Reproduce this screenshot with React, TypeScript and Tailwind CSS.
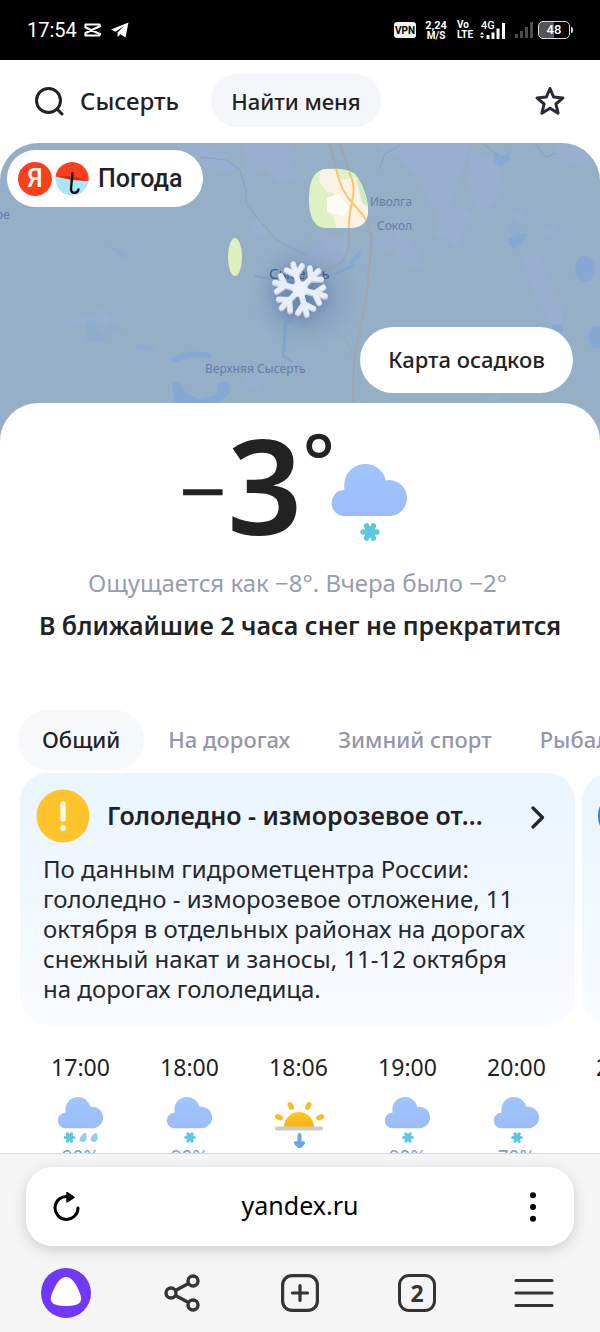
import { type ReactNode } from "react";

const tabs = ["Общий", "На дорогах", "Зимний спорт", "Рыбалка"];

type Hour = {
  time: string;
  kind: "snow" | "sleet" | "sunset";
  chance?: string;
};

const hours: Hour[] = [
  { time: "17:00", kind: "sleet", chance: "90%" },
  { time: "18:00", kind: "snow", chance: "90%" },
  { time: "18:06", kind: "sunset" },
  { time: "19:00", kind: "snow", chance: "90%" },
  { time: "20:00", kind: "snow", chance: "70%" },
  { time: "21:00", kind: "snow", chance: "70%" },
];

/* ---------- Weather icons ---------- */

function Flake({ x, y, s = 1 }: { x: number; y: number; s?: number }) {
  return (
    <g transform={`translate(${x} ${y}) scale(${s})`} fill="#5ec8de">
      <circle r="6" />
      {[0, 60, 120, 180, 240, 300].map((a) => (
        <g key={a} transform={`rotate(${a})`}>
          <rect x="0" y="-2.3" width="7" height="4.6" />
          <circle cx="7" cy="0" r="2.7" />
        </g>
      ))}
    </g>
  );
}

function CloudShape({ id }: { id: string }) {
  return (
    <>
      <defs>
        <linearGradient id={id} x1="0" y1="0" x2="0" y2="1">
          <stop offset="0" stopColor="#9fc6ff" />
          <stop offset="1" stopColor="#9dbcf5" />
        </linearGradient>
      </defs>
      <path
        fill={`url(#${id})`}
        d="M13 52a13 13 0 0 1-1-25.900h1.300v-6.100a21 21 0 0 1 41.500-3.600A18 18 0 1 1 60 52Z"
      />
    </>
  );
}

function BigCloud() {
  return (
    <svg viewBox="0 0 78 79" className="h-[79px] w-[78px]" aria-hidden="true">
      <CloudShape id="cloud-main" />
      <Flake x={39} y={68} />
    </svg>
  );
}

function HourIcon({ kind, id }: { kind: Hour["kind"]; id: string }) {
  if (kind === "sunset") {
    return (
      <svg viewBox="0 0 52 52" className="h-[52px] w-[52px]" aria-hidden="true">
        <defs>
          <linearGradient id={id} x1="0" y1="0" x2="0" y2="1">
            <stop offset="0" stopColor="#ffc62b" />
            <stop offset="1" stopColor="#fdb20a" />
          </linearGradient>
        </defs>
        <path fill={`url(#${id})`} d="M11 31a15 15 0 0 1 30 0Z" />
        <g stroke="#fdbb1f" strokeWidth="5" strokeLinecap="round">
          <path d="M4.500 20.500l3 1.500M17 8.500l1.500 3M36 8.500l-1.500 3M48.500 20.500l-3 1.500" />
        </g>
        <path d="M4 32.500h44" stroke="#c9cbce" strokeWidth="4" strokeLinecap="round" />
        <path
          d="M26.500 39v11M23 47l3.500 3.500 3.500-3.500"
          fill="none"
          stroke="#65a9ea"
          strokeWidth="4"
          strokeLinecap="round"
          strokeLinejoin="round"
        />
      </svg>
    );
  }
  return (
    <svg viewBox="0 0 52 52" className="h-[52px] w-[52px]" aria-hidden="true">
      <g transform="translate(2.500 1) scale(0.600)">
        <CloudShape id={id} />
      </g>
      {kind === "snow" ? (
        <Flake x={26} y={41.500} s={0.6} />
      ) : (
        <>
          <Flake x={14.500} y={41.500} s={0.6} />
          <g fill="#8fcdf5">
            <path d="M30 36.500c2.500 2.500 2.500 9.500-2 9.500-4.500 0-5-5 2-9.500ZM41 36.500c2.500 2.500 2.500 9.500-2 9.500-4.500 0-5-5 2-9.500Z" />
          </g>
        </>
      )}
    </svg>
  );
}

/* ---------- Status bar ---------- */

function StatusBar() {
  return (
    <div className="flex h-[60px] shrink-0 items-center bg-black pr-[27px] pl-[27px] font-['Roboto'] text-white">
      <span className="text-[20px] leading-6">17:54</span>
      <svg viewBox="0 0 18 14" className="ml-[7px] h-[14px] w-[18px]" aria-hidden="true">
        <path
          d="M15.500 3.500V1.500H1.500v3l15.500 7M17 2.800 1.500 10v2.500h14v-2"
          fill="none"
          stroke="#fff"
          strokeWidth="2.200"
          strokeLinejoin="round"
        />
      </svg>
      <svg viewBox="0 0 18 16" className="ml-[9px] h-[16px] w-[18px]" aria-hidden="true">
        <path fill="#fff" d="M17.500.5 0 7.500l4.500 2.200L13 4 6.500 10.600V15l3-2.800 5 3.300Z" />
      </svg>

      <div className="ml-auto flex items-center">
        <span className="flex h-[16px] w-[22px] items-center justify-center rounded-[3px] bg-[#f2f2f2] text-[10px] font-bold text-black">
          VPN
        </span>
        <span className="ml-[8px] w-[24px] text-center text-[11px] leading-[11px] font-bold">
          2,24
          <span className="block text-[10px] leading-[10px]">M/S</span>
        </span>
        <span className="ml-[9px] w-[18px] text-[10px] leading-[10px] font-bold">
          Vo
          <br />
          LTE
        </span>
        <svg viewBox="0 0 26 20" className="ml-[5px] h-[20px] w-[26px]" aria-hidden="true">
          <text x="1" y="9" fill="#fff" fontSize="11" fontWeight="500" fontFamily="Roboto, sans-serif">
            4G
          </text>
          <path fill="#fff" d="M0 14.500 2 12l2 2.500ZM0 16l2 2.500L4 16Z" />
          <path d="M8 15v4M13 12.500v6.500M18 8.500v10.500M23.500 3v16" stroke="#fff" strokeWidth="3" />
        </svg>
        <svg viewBox="0 0 20 18" className="ml-[8px] h-[18px] w-[20px]" aria-hidden="true">
          <path d="M2.500 13v4M7.500 10v7M12.500 6v11M17.500 1v16" stroke="#4c4c4c" strokeWidth="3" />
        </svg>
        <span className="ml-[4px] flex h-[18px] w-[32px] items-center justify-center rounded-[5px] border border-[#ddd] bg-gradient-to-r from-[#555] from-50% to-black to-50% text-[13px] font-medium">
          48
        </span>
        <span className="ml-px h-[6px] w-[2px] rounded-r bg-[#ddd]" />
      </div>
    </div>
  );
}

/* ---------- Header ---------- */

function Header() {
  return (
    <header className="flex h-[83px] items-center px-[34px] pb-[2px]">
      <button type="button" className="flex items-center gap-4 text-[24px] leading-8 font-medium">
        <svg viewBox="0 0 30 30" className="h-[30px] w-[30px]" aria-hidden="true">
          <circle cx="14.500" cy="14.500" r="12" fill="none" stroke="#222" strokeWidth="3" />
          <path d="m23 23 5 5" stroke="#222" strokeWidth="3" strokeLinecap="round" />
        </svg>
        Сысерть
      </button>
      <button
        type="button"
        className="ml-8 h-[53px] w-[170px] rounded-full bg-[#f5f6f9] text-[22px] leading-8 font-medium"
      >
        Найти меня
      </button>
      <button type="button" aria-label="В избранное" className="ml-auto">
        <svg viewBox="0 0 32 32" className="h-[32px] w-[32px]" aria-hidden="true">
          <path
            d="m16 3.500 3.700 8.600 9.300.8-7.100 6.100 2.200 9.200L16 23.300l-8.100 4.900 2.200-9.200L3 12.900l9.300-.8Z"
            fill="none"
            stroke="#2a2b35"
            strokeWidth="3"
            strokeLinejoin="round"
          />
        </svg>
      </button>
    </header>
  );
}

/* ---------- Map ---------- */

const arms = [15, 75, 135, 195, 255, 315];

function Snowflake() {
  return (
    <svg
      viewBox="-34 -34 68 68"
      className="absolute top-[112px] left-1/2 h-[68px] w-[68px] -translate-x-1/2 drop-shadow-[0_4px_7px_rgba(60,90,140,0.45)]"
      aria-hidden="true"
    >
      <g fill="none" stroke="#bccae2" strokeWidth="6" strokeLinecap="round" transform="translate(0 1)">
        {arms.map((a) => (
          <path key={a} transform={`rotate(${a})`} d="M0 0H26M15 0l7-8M15 0l7 8" />
        ))}
      </g>
      <g fill="none" stroke="#e8eef9" strokeWidth="5" strokeLinecap="round">
        {arms.map((a) => (
          <path key={a} transform={`rotate(${a})`} d="M0 0H26M15 0l7-8M15 0l7 8" />
        ))}
      </g>
      <circle r="8" fill="#edf1fa" />
    </svg>
  );
}

function MapLabel({ className, children }: { className: string; children: ReactNode }) {
  return <span className={`absolute whitespace-nowrap ${className}`}>{children}</span>;
}

function MapView() {
  return (
    <section className="relative h-[297px] overflow-hidden rounded-t-[38px] bg-[#95afc7] text-[#687ca8]">
      <svg
        viewBox="0 143 600 297"
        preserveAspectRatio="xMidYMid slice"
        className="block h-full w-full"
        aria-hidden="true"
      >
        <defs>
          <clipPath id="clearing">
            <path d="M325 169c14-1 24 0 30 5 8 10 13 26 13 36 0 14-8 18-20 18h-22c-12 0-17-12-17-28 0-18 4-29 16-31Z" />
          </clipPath>
          <radialGradient id="haze">
            <stop offset="0" stopColor="#7b96bd" stopOpacity=".8" />
            <stop offset="1" stopColor="#7b96bd" stopOpacity="0" />
          </radialGradient>
        </defs>
        {/* built-up and field patches */}
        <g fill="#9dafd5" opacity=".6">
          <path d="m176 143 34 2 20 12-6 4-26-2-16-8ZM200 158l26 2 10 8-8 4-24-4ZM240 143h56l-8 14 12 20-20 6-18-14-14 8ZM376 143h96l-6 18-6 20-10 24-6 10-14-8-10-26-8-8-14-16-14-6ZM408 155l16 4 8 24-6 10-10-14Z" />
          <path d="m470 150 30 10 4 30-12 16-16 6-10-30ZM436 210l28-4 10 10-12 20-4 14-14-12-10-2ZM398 214l14 8-4 14 12 20 4 12-20-2-10-14-16-4-4-8 20-2ZM354 240l-8 18-24 10-20-4 10-18 22-10Z" />
          <path d="m520 256 20-2 4 14 12 26 8 12-4 22-10-6-18-30ZM540 231l20-9-8 14ZM249 221l10-2 10 14-8 6-10-6ZM62 322l28-5 12-9 12 12-10 2-18 2-18 4ZM243 375l26-2-12 18-10-4ZM552 143l30 2 10 14-14 8-20-10ZM512 212l12-4-4 8 6 6-12-2ZM484 396l20-2-8 8Z" />
        </g>
        {/* lakes */}
        <g fill="#84a8d6" opacity=".85">
          <path d="m494 153 8 3 8-5-1 9-10 7-6-8ZM509 238l8-4 10-1-5 12-8 4-6-5ZM170 358l20-7 22 2-2 6-18-2-20 6ZM172 383l8-2 6 12 14 6 16-4 2-12 10-2 2 12-8 7-14 6-34-4ZM349 263l6-8 7-7-2 8-9 9ZM286 314l10 2-8 10-2 26h-3Z" />
          <ellipse cx="585" cy="269" rx="10" ry="13" />
          <ellipse cx="597" cy="337" rx="9" ry="11" />
          <circle cx="557" cy="330" r="6" />
          <path d="m110 247 18 5-4 8ZM104 322l18 7-8 4ZM86 322l8-3 4 10 8 12-22 2ZM136 344l20 2-6 6-14-2ZM506 226l10-4 6 10-12 4Z" opacity=".45" />
        </g>
        {/* rivers and minor roads */}
        <g fill="none" stroke="#7f9bbb" strokeWidth="1" opacity=".7">
          <path d="M200 157l26 3 14 10 6 20v14l30 36 20 10 12 6" />
          <path d="M482 143l16 12M534 143l12 14 10-4M400 145l-16 10-4 14" />
          <path d="M254 276l16 3M355 265l-20 9M285 322l-2 34 10 6" strokeWidth="2" stroke="#7f9fcb" />
        </g>
        <g fill="none" stroke="#a49f9f" opacity=".6">
          <path d="M316 315l12 12 18 12 6 14" />
          <path d="M329 143l8 28 8 26 22 24 5 18-6 60-12 60-1 45" strokeWidth="2" />
          <path d="M340 143l9 28 5 20-5 22v34l-6 14-14 8" strokeWidth="2" />
        </g>
        <circle cx="306" cy="294" r="56" fill="url(#haze)" />
        {/* areas without precipitation */}
        <ellipse cx="235" cy="257" rx="7" ry="19" fill="#def0bd" />
        <g clipPath="url(#clearing)">
          <rect x="300" y="160" width="80" height="80" fill="#ddf1c5" />
          <path
            fill="#f9f3e6"
            d="m321 168 14 2 10 18-8 6-10-2-8-10ZM340 180l24-4 8 60-34-2-4-16-8-10 8-14ZM352 168l16 4 4 20Z"
          />
          <path fill="#fffef4" d="m327 198 12-4 10 14-6 8-16-4Z" />
          <path fill="#cdeebc" d="m356 172 10 14 4 24-8-8-4-16Z" />
          <path
            d="M335 162c3 26 14 38 20 44s12 14 16 22M349 172c6 12 5 20 3 30s-4 16-3 30"
            fill="none"
            stroke="#fbc56b"
            strokeWidth="2"
          />
        </g>
      </svg>

      <MapLabel className="top-[51px] left-[370px] text-[12px] leading-4">Иволга</MapLabel>
      <MapLabel className="top-[75px] left-[377px] text-[12px] leading-4">Сокол</MapLabel>
      <MapLabel className="top-[218px] left-[205px] text-[12px] leading-4">Верхняя Сысерть</MapLabel>
      <MapLabel className="top-[64px] -left-[4px] text-[12px] leading-4">ое</MapLabel>
      <MapLabel className="top-[120px] left-[269px] text-[15px] leading-5 text-[#455a8c]">Сысерть</MapLabel>
      <Snowflake />

      <a
        href="#weather"
        className="absolute top-[7px] left-[7px] flex h-[57px] w-[196px] items-center rounded-full bg-white pl-[11px] text-[#222]"
      >
        <span className="flex h-[34px] w-[34px] items-center justify-center rounded-full bg-[#fc3f1d] font-['Roboto'] text-[25px] leading-8 font-medium text-white">
          Я
        </span>
        <svg viewBox="0 0 34 34" className="ml-[3px] h-[34px] w-[34px]" aria-hidden="true">
          <circle cx="17" cy="17" r="16.500" fill="#a9e5fc" />
          <path d="M.5 14.500a16.500 16.500 0 0 1 33 4.500Z" fill="#fc3f1d" />
          <path d="M.5 14.500 17 14l16.500 5-16.500-1Z" fill="#d32a12" />
          <path
            d="M17.500 11l-1.500 16c-.2 5 6.500 5 7.500.5"
            fill="none"
            stroke="#111"
            strokeWidth="2.400"
            strokeLinecap="round"
          />
        </svg>
        <span className="ml-[9px] font-['Roboto'] text-[25px] leading-8 font-medium">Погода</span>
      </a>

      <button
        type="button"
        className="absolute top-[184px] right-[27px] h-[66px] w-[213px] rounded-full bg-white pb-[3px] text-[22px] leading-8 font-medium text-[#222]"
      >
        Карта осадков
      </button>
    </section>
  );
}

/* ---------- Current weather ---------- */

function CurrentWeather() {
  return (
    <section className="text-center">
      <h1 className="flex h-[148px] justify-center pr-[12px] font-normal">
        <span className="mt-[42px] text-[84px] leading-[88px]">−</span>
        <span className="mt-[14px] text-[132px] leading-[132px] font-semibold">3</span>
        <span className="mt-[18px] text-[76px] leading-[76px] font-medium">°</span>
        <span className="mt-[60px] -ml-[4px]">
          <BigCloud />
        </span>
      </h1>
      <p className="mt-[15px] pr-[5px] text-[24px] leading-8 text-[#9a9cb0]">
        Ощущается как −8°. Вчера было −2°
      </p>
      <p className="mt-[10px] text-[25px] leading-8 font-semibold">
        В ближайшие 2 часа снег не прекратится
      </p>
    </section>
  );
}

function Tabs() {
  return (
    <nav className="mt-[69px] flex h-[60px] overflow-hidden pl-[18px]">
      {tabs.map((tab, i) => (
        <button
          key={tab}
          type="button"
          className={`shrink-0 rounded-full px-6 pb-[3px] text-[22px] leading-8 font-medium whitespace-nowrap ${
            i === 0 ? "bg-[#f7f8fa] text-[#222]" : "text-[#9496ac]"
          }`}
        >
          {tab}
        </button>
      ))}
    </nav>
  );
}

function Alerts() {
  return (
    <section className="mt-[3px] flex gap-[7px] overflow-hidden pl-[20px]">
      <article className="w-[calc(100vw-45px)] shrink-0 rounded-[28px] bg-gradient-to-b from-[#e9f5ff] to-[#f9fbff] px-[23px] pt-[16px] pb-[21px]">
        <button type="button" className="-ml-[7px] flex w-full items-center text-left">
          <svg viewBox="0 0 54 54" className="h-[54px] w-[54px] shrink-0" aria-hidden="true">
            <circle cx="27" cy="27" r="26.500" fill="#ffc42b" />
            <path d="M27 15v15" stroke="#fff8e4" strokeWidth="5.500" strokeLinecap="round" />
            <circle cx="27" cy="39" r="3" fill="#fff8e4" />
          </svg>
          <span className="ml-[17px] pb-[3px] text-[25px] leading-8 font-semibold whitespace-nowrap">
            Гололедно - изморозевое от...
          </span>
          <svg viewBox="0 0 14 26" className="ml-auto h-[26px] w-[14px]" aria-hidden="true">
            <path d="m2 5 9.500 9.500L2 24" fill="none" stroke="#222530" strokeWidth="3.200" strokeLinecap="round" strokeLinejoin="round" />
          </svg>
        </button>
        <p className="mt-[11px] text-[24px] leading-[30px] text-[#25282d]">
          По данным гидрометцентра России:
          <br />
          гололедно - изморозевое отложение, 11
          <br />
          октября в отдельных районах на дорогах
          <br />
          снежный накат и заносы, 11-12 октября
          <br />
          на дорогах гололедица.
        </p>
      </article>
      <article className="w-[calc(100vw-45px)] shrink-0 rounded-[28px] bg-gradient-to-b from-[#e9f5ff] to-[#f9fbff] px-[16px] pt-[16px]">
        <div className="h-[54px] w-[54px] rounded-full bg-[#2f7fc9]" />
      </article>
    </section>
  );
}

function Hourly() {
  return (
    <ul className="mt-[26px] flex overflow-hidden pl-[26px]">
      {hours.map((hour, i) => (
        <li key={hour.time} className="flex w-[109px] shrink-0 flex-col items-center">
          <span className="text-[23px] leading-8">{hour.time}</span>
          <span className="mt-[13px]">
            <HourIcon kind={hour.kind} id={`hour-${i}`} />
          </span>
          <span className="-mt-[3px] text-[19px] leading-6 text-[#7f9fc8]">{hour.chance}</span>
        </li>
      ))}
    </ul>
  );
}

/* ---------- Browser chrome ---------- */

function BrowserBar() {
  return (
    <footer className="shrink-0 border-t border-[#d9dce0] bg-[#f5f5f5] pt-[13px] pb-[12px]">
      <div className="mx-[26px] flex h-[79px] items-center rounded-[26px] bg-white px-[26px] shadow-[0_4px_14px_rgba(0,0,0,0.16)]">
        <button type="button" aria-label="Обновить">
          <svg viewBox="0 0 30 30" className="h-[30px] w-[30px]" aria-hidden="true">
            <path d="M16 4.500A11.500 11.500 0 1 0 26 16" fill="none" stroke="#000" strokeWidth="3" strokeLinecap="round" />
            <path d="M15 .5v9.500l7-4.700Z" stroke="#000" strokeWidth="1.500" strokeLinejoin="round" />
          </svg>
        </button>
        <input
          type="text"
          aria-label="Адрес"
          defaultValue="yandex.ru"
          className="min-w-0 flex-1 bg-transparent pb-[3px] text-center text-[25px] leading-8 text-black outline-none"
        />
        <button type="button" aria-label="Ещё">
          <svg viewBox="0 0 30 30" className="h-[30px] w-[30px]" aria-hidden="true">
            <circle cx="15" cy="3.200" r="3" />
            <circle cx="15" cy="15" r="3" />
            <circle cx="15" cy="26.800" r="3" />
          </svg>
        </button>
      </div>

      <nav className="mt-[20px] grid h-[54px] grid-cols-5 place-items-center px-[7px] text-[#343434]">
        <button type="button" aria-label="Алиса">
          <svg viewBox="0 0 50 50" className="h-[50px] w-[50px]" aria-hidden="true">
            <circle cx="25" cy="25" r="25" fill="#7038fa" />
            <path
              d="M25 9c5 0 9 5 12 12 3 6 4 10 2.500 12.500C37.500 37 32 38 25 38s-12.500-1-14.500-4.500C9 31 10 27 13 21c3-7 7-12 12-12Z"
              fill="#fff"
            />
          </svg>
        </button>
        <button type="button" aria-label="Поделиться">
          <svg viewBox="0 0 38 38" className="h-[38px] w-[38px]" fill="none" stroke="currentColor" strokeWidth="3.400" aria-hidden="true">
            <circle cx="7" cy="19" r="5" />
            <circle cx="29" cy="7" r="5" />
            <circle cx="29" cy="31" r="5" />
            <path d="M11.500 16.500 24.500 9.500M11.500 21.500l13 7" />
          </svg>
        </button>
        <button type="button" aria-label="Новая вкладка">
          <svg viewBox="0 0 38 38" className="h-[38px] w-[38px]" fill="none" stroke="currentColor" strokeWidth="3.200" strokeLinecap="round" aria-hidden="true">
            <rect x="1.600" y="1.600" width="34.800" height="34.800" rx="9.500" />
            <path d="M19 11.500v15M11.500 19h15" />
          </svg>
        </button>
        <button
          type="button"
          aria-label="Вкладки: 2"
          className="flex h-[38px] w-[38px] items-center justify-center rounded-[11px] border-3 border-[#343434] text-[23px] leading-8 font-bold"
        >
          2
        </button>
        <button type="button" aria-label="Меню">
          <svg viewBox="0 0 40 30" className="h-[30px] w-[40px]" stroke="currentColor" strokeWidth="3.200" strokeLinecap="round" aria-hidden="true">
            <path d="M2 2.500h36M2 15h36M2 27.500h36" />
          </svg>
        </button>
      </nav>
    </footer>
  );
}

export default function App() {
  return (
    <div className="flex h-screen flex-col bg-white font-['Noto_Sans',sans-serif] text-[#222]">
      <StatusBar />
      <main className="min-h-0 flex-1 overflow-hidden">
        <Header />
        <MapView />
        <div className="relative -mt-[37px] rounded-t-[38px] bg-white pt-px">
          <CurrentWeather />
          <Tabs />
          <Alerts />
          <Hourly />
        </div>
      </main>
      <BrowserBar />
    </div>
  );
}
